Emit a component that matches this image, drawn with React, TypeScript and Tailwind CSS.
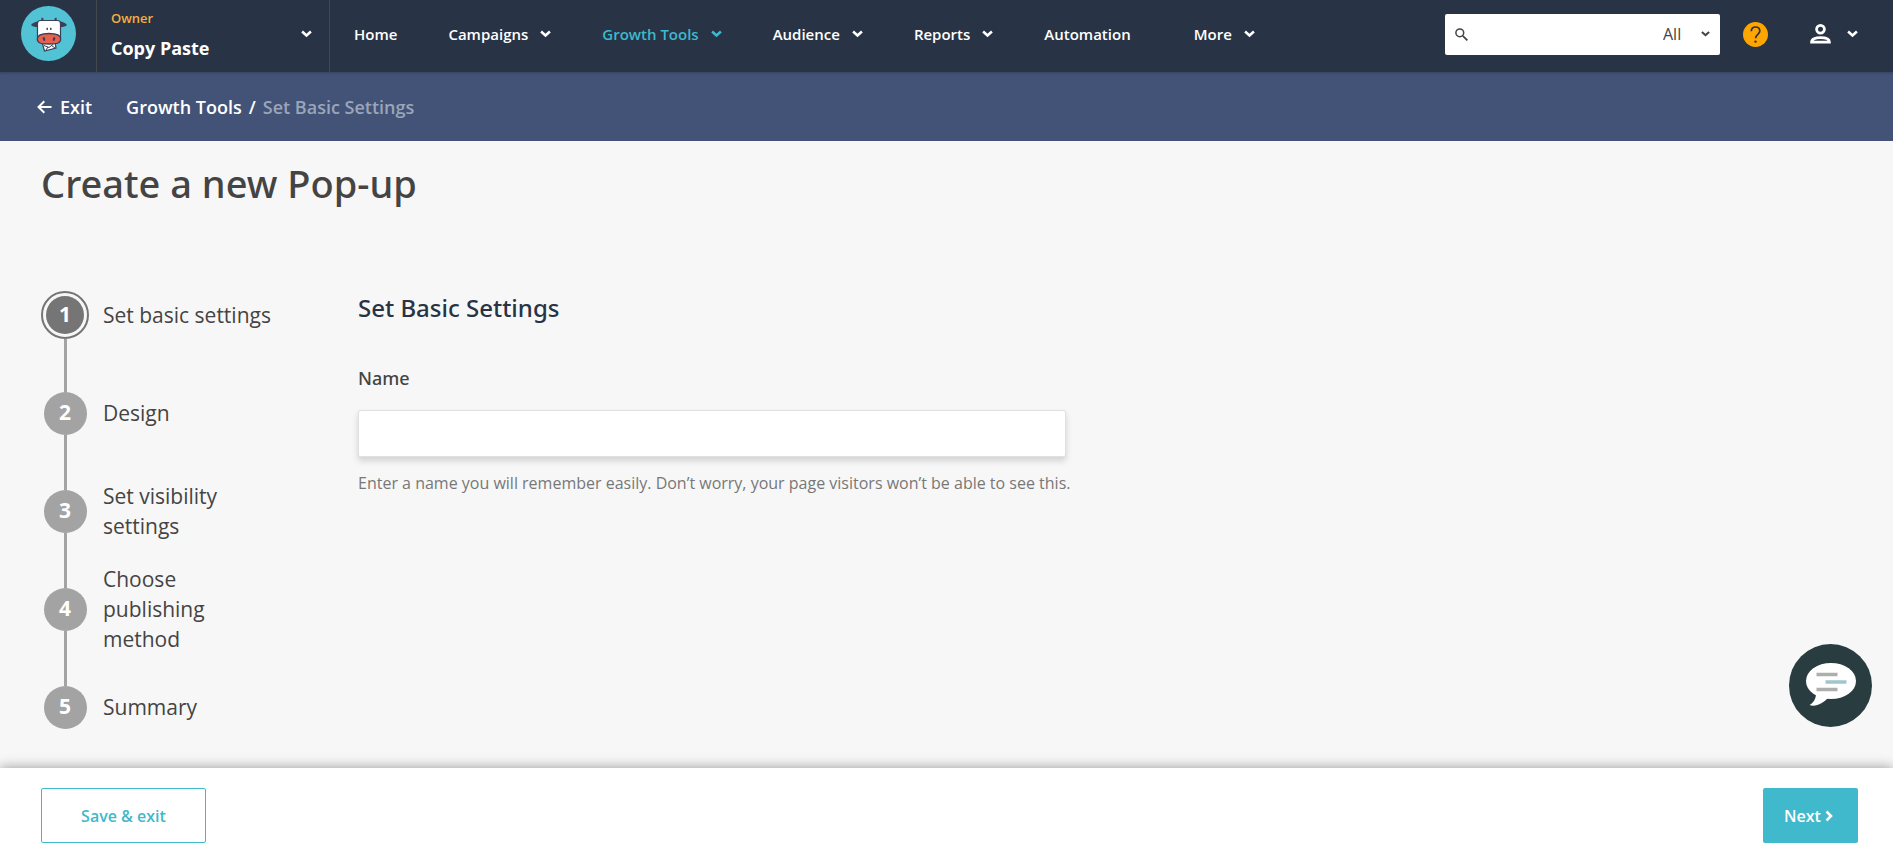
import clsx from 'clsx';

const navItems = [
  { label: 'Home', menu: false },
  { label: 'Campaigns', menu: true },
  { label: 'Growth Tools', menu: true, active: true },
  { label: 'Audience', menu: true },
  { label: 'Reports', menu: true },
  { label: 'Automation', menu: false },
  { label: 'More', menu: true },
];

const steps = [
  'Set basic settings',
  'Design',
  'Set visibility settings',
  'Choose publishing method',
  'Summary',
];

const Chevron = ({ className = 'w-[11px]' }) => (
  <svg viewBox="0 0 12 8" className={clsx('h-2 shrink-0', className)} fill="none" stroke="currentColor" strokeWidth="2.8" aria-hidden="true">
    <path d="M1.2 1.2 6 5.600l4.800-4.400" />
  </svg>
);

const CowLogo = () => (
  <svg viewBox="0 0 55 55" className="w-[55px] h-[55px]" aria-hidden="true">
    <circle cx="27.500" cy="27.500" r="27.500" fill="#51c3d4" />
    {/* ears and horns */}
    <path d="M10 19c2-2.500 5-3.800 8-3.500l-.5 5.500c-3 .2-6-.2-7.500-2Z" fill="#3a4057" />
    <path d="M46 19c-2-2.500-5-3.800-8-3.500l.5 5.500c3 .2 6-.2 7.500-2Z" fill="#3a4057" />
    <path d="M22 15c-.8-1-1-2-.5-3.200M34 15c.8-1 1-2 .5-3.200" stroke="#3a4057" strokeWidth="2" fill="none" />
    {/* head */}
    <path d="M16.500 32V17.500c0-2 1-3 3-3h17c2 0 3 1 3 3V32Z" fill="#fff" stroke="#3a4057" strokeWidth="1.200" />
    <path d="M26.200 21.800v2.200M29.800 21.800v2.200" stroke="#3a4057" strokeWidth="1.400" />
    {/* envelope */}
    <path d="m21.500 38 12.500-1.500 1 5.500-11.500 3Z" fill="#fff" stroke="#3a4057" strokeWidth="1.200" />
    <path d="m23 39.500 5 2 4.500-3.500M25 44l2-3M34 42l-3.500-2.500" stroke="#3a4057" strokeWidth="1" fill="none" />
    {/* muzzle */}
    <path d="M16.300 33c0-3.500 4.500-5.500 11.700-5.500s11.700 2 11.700 5.500c0 4-3.200 5-11.700 5s-11.700-1-11.700-5Z" fill="#e8604f" stroke="#3a4057" strokeWidth="1.300" />
    <ellipse cx="23" cy="33" rx="1.200" ry="2" fill="#3a4057" transform="rotate(-15 23 33)" />
    <ellipse cx="33" cy="33" rx="1.200" ry="2" fill="#3a4057" transform="rotate(15 33 33)" />
  </svg>
);

const Header = () => (
  <header className="flex items-center h-[72px] bg-[#283345] text-white">
    <a href="#" aria-label="Dashboard" className="w-24 h-full pl-[21px] pt-[6px] shrink-0">
      <CowLogo />
    </a>
    <button type="button" className="flex items-center justify-between w-[234px] h-full pl-[14px] pr-[17px] pb-1 border-x border-[#45474a] text-left shrink-0">
      <span className="flex flex-col">
        <span className="text-[13px] leading-5 font-semibold text-[#f3b03f]">Owner</span>
        <span className="text-lg leading-6 mt-2 font-bold">Copy Paste</span>
      </span>
      <Chevron />
    </button>

    <nav className="flex items-center gap-[51px] pl-6 pb-1 text-[15px] font-semibold whitespace-nowrap">
      {navItems.map((item) => (
        <a
          key={item.label}
          href="#"
          className={clsx('flex items-center gap-3 last:ml-3', item.active && 'text-[#3cb9cc]')}
        >
          {item.label}
          {item.menu && <Chevron />}
        </a>
      ))}
    </nav>

    <div className="flex items-center ml-auto pr-[35px] pb-1">
      <div className="flex items-center w-[275px] h-[41px] px-[10px] rounded-xs bg-white text-[#444]">
        <svg viewBox="0 0 13 13" className="w-[13px] h-[13px] shrink-0" fill="none" stroke="currentColor" strokeWidth="1.500" aria-hidden="true">
          <circle cx="4.800" cy="4.800" r="3.900" />
          <path d="m7.800 7.800 4.600 4.600" strokeWidth="1.800" />
        </svg>
        <input type="search" aria-label="Search" className="flex-1 min-w-0 h-full px-2 outline-none" />
        <div className="flex items-center relative">
          <select aria-label="Search in" className="appearance-none w-[47px] text-base outline-none">
            <option>All</option>
          </select>
          <Chevron className="absolute right-0 w-[9px] pointer-events-none" />
        </div>
      </div>
      <button type="button" aria-label="Help" className="ml-[23px]">
        <svg viewBox="0 0 25 25" className="w-[25px] h-[25px]" fill="none">
          <circle cx="12.500" cy="12.500" r="12.500" fill="#ffa500" />
          <path d="M8.300 9.300C8.300 6.500 10 5 12.500 5s4.300 1.500 4.300 3.900c0 3.300-4.200 3.600-4.200 7.300" stroke="#283345" strokeWidth="1.700" />
          <circle cx="12.500" cy="19.600" r="1.200" fill="#283345" />
        </svg>
      </button>
      <button type="button" aria-label="Account" className="flex items-center gap-4 ml-[42px]">
        <svg viewBox="0 0 21 20" className="w-[21px] h-5" fill="none" stroke="currentColor" strokeWidth="2.800" aria-hidden="true">
          <circle cx="10.500" cy="5.300" r="3.900" />
          <path d="M1.600 18.200c0-3.200 3.600-4.500 8.900-4.500s8.900 1.300 8.900 4.500Z" />
        </svg>
        <Chevron />
      </button>
    </div>
  </header>
);

const Breadcrumbs = () => (
  <div className="flex items-center h-[69px] pl-[37px] bg-[#425377] text-white text-lg font-semibold shadow-[inset_0_3px_3px_-2px_rgba(0,0,0,0.2)]">
    <a href="#" className="flex items-center gap-2">
      <svg viewBox="0 0 15 14" className="w-[15px] h-[14px]" fill="none" stroke="currentColor" strokeWidth="2" aria-hidden="true">
        <path d="M14.500 7H1.800M7.300 1.200 1.500 7l5.800 5.800" />
      </svg>
      Exit
    </a>
    <nav aria-label="Breadcrumb" className="flex gap-[7px] ml-[34px]">
      <a href="#">Growth Tools</a>
      <span>/</span>
      <span className="text-[#9ba5b9]">Set Basic Settings</span>
    </nav>
  </div>
);

const Stepper = () => (
  <ol className="w-[317px] shrink-0">
    {steps.map((step, index) => {
      const current = index === 0;
      return (
        <li key={step} className="flex items-center gap-[14px] h-[98px]">
          <div className="flex flex-col items-center w-12 h-full">
            <div className={clsx('w-[3px] flex-1', current ? 'bg-transparent' : 'bg-[#a3a3a3]')} />
            {current ? (
              <div className="flex w-12 h-12 p-[3px] rounded-full border-2 border-[#757575]">
                <div className="flex items-center justify-center flex-1 rounded-full bg-[#757575] text-white text-[21px] font-bold">1</div>
              </div>
            ) : (
              <div className="flex items-center justify-center w-[43px] h-[43px] rounded-full bg-[#a3a3a3] text-white text-[21px] font-bold">
                {index + 1}
              </div>
            )}
            <div className={clsx('w-[3px] flex-1', index === steps.length - 1 ? 'bg-transparent' : 'bg-[#a3a3a3]')} />
          </div>
          <span className="w-[175px] text-[21px] leading-[30px]">{step}</span>
        </li>
      );
    })}
  </ol>
);

const App = () => {
  return (
    <div className="flex flex-col min-h-screen bg-[#f7f7f7] text-[#444] font-['Open_Sans','Noto_Sans',sans-serif]">
      <Header />
      <Breadcrumbs />

      <main className="flex-1 px-[41px] pt-[18px]">
        <h1 className="text-[38px] leading-[48px] font-medium font-['Noto_Sans',sans-serif]">Create a new Pop-up</h1>

        <div className="flex mt-[59px]">
          <Stepper />
          <section className="flex-1 max-w-[708px] pt-[26px]">
            <h2 className="text-2xl font-medium font-['Noto_Sans',sans-serif] text-[#283345]">Set Basic Settings</h2>
            <label htmlFor="name" className="block mt-[42px] text-lg leading-6 font-medium font-['Noto_Sans',sans-serif]">Name</label>
            <input
              id="name"
              type="text"
              className="block w-full h-[47px] mt-5 px-4 rounded-xs border border-[#e0e0e0] bg-white shadow-[0_4px_6px_rgba(0,0,0,0.15)] outline-none"
            />
            <p className="mt-[14px] text-base text-[#777] lg:whitespace-nowrap">
              Enter a name you will remember easily. Don’t worry, your page visitors won’t be able to see this.
            </p>
          </section>
        </div>
      </main>

      <footer className="flex items-center justify-between pl-[41px] pr-[35px] pt-5 pb-4 bg-white text-base font-semibold shadow-[0_0_12px_rgba(0,0,0,0.4)]">
        <button type="button" className="h-[55px] w-[165px] rounded-xs border border-[#3fb9cb] text-[#3fb9cb]">
          Save &amp; exit
        </button>
        <button type="button" className="flex items-center justify-center gap-1 h-[55px] w-[95px] pr-1 rounded-xs bg-[#3fb9cb] text-white">
          Next
          <svg viewBox="0 0 8 12" className="w-2 h-3" fill="none" stroke="currentColor" strokeWidth="2.600" aria-hidden="true">
            <path d="M1.500 1.500 6 6l-4.500 4.500" />
          </svg>
        </button>
      </footer>

      <button type="button" aria-label="Open chat" className="fixed right-[21px] bottom-[132px]">
        <svg viewBox="0 0 83 83" className="w-[83px] h-[83px]">
          <circle cx="41.500" cy="41.500" r="41.500" fill="#293d40" />
          <ellipse cx="42" cy="37" rx="25" ry="18" fill="#fff" />
          <path d="M27 50c0 5-3 9-6.500 11 6 2.500 14-2 19-7.500Z" fill="#fff" />
          <path d="M27.500 30.500h21M27.500 45.500h21" stroke="#aeaeae" strokeWidth="3.500" />
          <path d="M36.500 38h21" stroke="#9fc6cf" strokeWidth="3.500" />
        </svg>
      </button>
    </div>
  );
};

export default App;
